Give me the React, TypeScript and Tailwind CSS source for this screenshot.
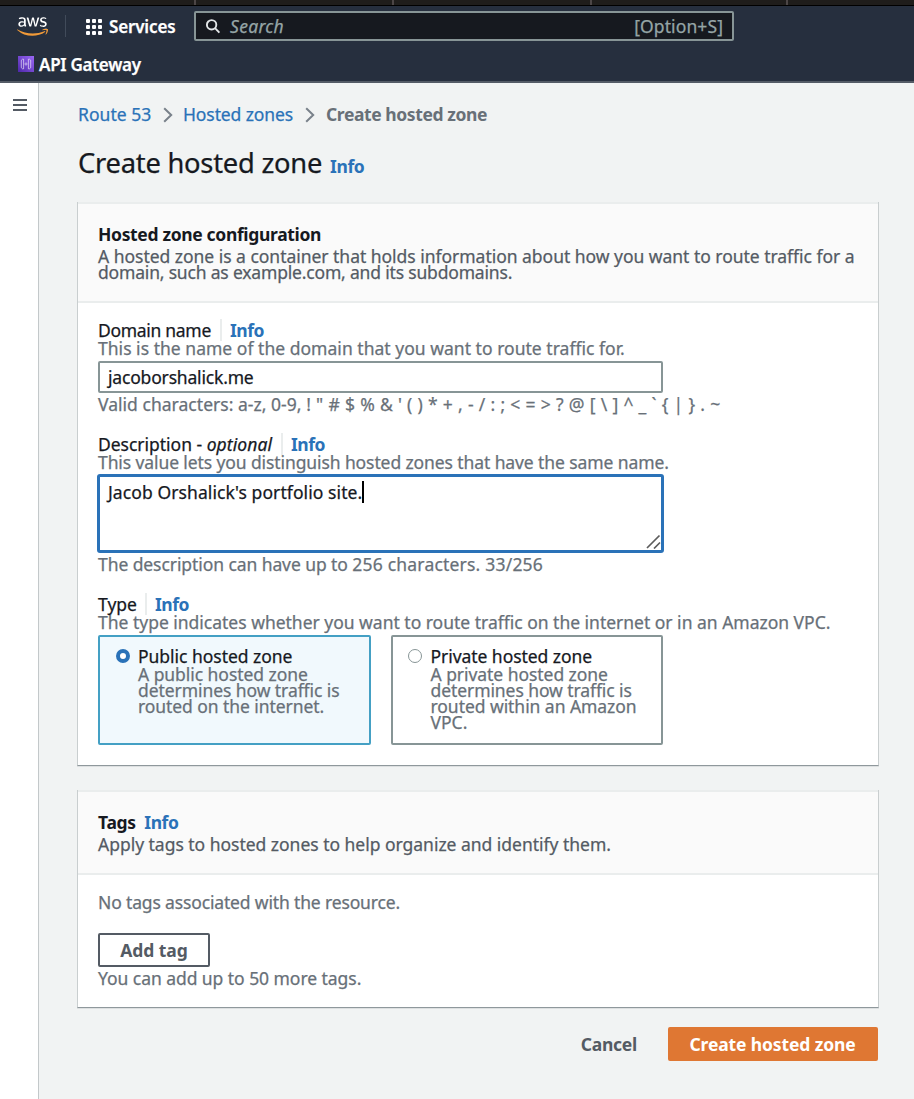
import type { ReactNode } from "react";
import { FaAws } from "react-icons/fa";

function Info({ className = "" }: { className?: string }) {
  return (
    <a className={`font-bold tracking-[-0.45px] text-[#2a72b8] ${className}`}>Info</a>
  );
}

function Chevron() {
  return (
    <svg width="10" height="16" viewBox="0 0 10 16" fill="none" stroke="#79818a" strokeWidth="2">
      <path d="M1.2 1.2 8.2 8l-7 6.8" />
    </svg>
  );
}

function FieldLabel({ children, gap }: { children: ReactNode; gap: string }) {
  return (
    <div className="flex h-[22px] items-center whitespace-pre text-[#16191f]">
      {children}
      <span className={`h-[22px] w-0.5 shrink-0 bg-[#eaeded] ${gap}`} />
      <Info className="ml-2" />
    </div>
  );
}

function Card({ header, children }: { header: ReactNode; children: ReactNode }) {
  return (
    <section className="w-[802px] border-x border-b border-x-[#c9cecf] border-b-[#8f989c] bg-white shadow-[0_1px_0_#dde0e1]">
      <div className="border-y-2 border-[#eaeded] bg-[#fafafa] pl-5">{header}</div>
      <div className="pl-5">{children}</div>
    </section>
  );
}

function ApiGatewayIcon() {
  return (
    <svg width="16" height="16" viewBox="0 0 16 16">
      <defs>
        <linearGradient id="apigw" x1="0" y1="1" x2="1" y2="0">
          <stop offset="0" stopColor="#4d27aa" />
          <stop offset="1" stopColor="#9a68f5" />
        </linearGradient>
      </defs>
      <rect width="16" height="16" fill="url(#apigw)" />
      <g fill="none" stroke="#fff" strokeWidth="0.65" strokeOpacity="0.9">
        <path d="M3.300 4.300v7.400l1.200 1.100h1.100V3.200H4.500z" />
        <path d="M12.700 4.300v7.400l-1.200 1.100h-1.100V3.200h1.100z" />
        <path d="M7.600 6.700 7 8l.6 1.300M8.400 6.700 9 8l-.6 1.300" />
      </g>
    </svg>
  );
}

function TopNav() {
  return (
    <header>
      <div className="flex h-[6px] border-b border-black bg-[#1f1d1b]">
        <div className="h-[5px] w-[196px] border-r-2 border-[#4c4646]" />
        <div className="h-[5px] w-[198px] border-r-2 border-[#4c4646]" />
        <div className="h-[5px] w-[198px] border-r-2 border-[#4c4646]" />
        <div className="h-[5px] w-[196px] border-r-2 border-[#4c4646]" />
      </div>
      <div className="flex h-[77px] flex-col border-b-2 border-[#545b66] bg-[#262f3e] pt-[5px]">
        <div className="flex h-[30px] items-center">
          <svg width="0" height="0">
            <defs>
              <linearGradient id="aws" x1="0" y1="0" x2="0" y2="1">
                <stop offset="0.61" stopColor="#fff" />
                <stop offset="0.61" stopColor="#f19a38" />
              </linearGradient>
            </defs>
          </svg>
          <FaAws className="ml-[17px] h-[25px] w-[31px]" style={{ fill: "url(#aws)" }} />
          <span className="ml-[17px] h-[22px] w-px bg-[#414b5a]" />
          <div className="mt-[2px] ml-5 grid grid-cols-3 gap-0.5">
            {Array.from({ length: 9 }, (_, i) => (
              <span key={i} className="size-1 rounded-[1px] bg-white" />
            ))}
          </div>
          <span className="mt-[2px] ml-[7px] w-[85px] text-[17px] font-semibold tracking-[-0.15px] text-white">Services</span>
          <div className="flex h-[30px] w-[540px] items-center rounded-[2px] border-2 border-[#879596] bg-[#16191f] text-[#95a5a6]">
            <svg className="ml-[9px]" width="16" height="16" viewBox="0 0 16 16" fill="none" stroke="#e3e7e9" strokeWidth="1.900">
              <circle cx="6.600" cy="6.800" r="4.700" />
              <path d="m10 10.200 4.400 4.500" />
            </svg>
            <span className="ml-[9px] grow tracking-[0.3px] italic">Search</span>
            <span className="mr-[9px] tracking-[0.1px]">[Option+S]</span>
          </div>
        </div>
        <div className="mt-[11px] flex h-[24px] items-center pl-[18px]">
          <ApiGatewayIcon />
          <span className="mt-[2px] ml-[5px] text-[17px] font-semibold tracking-[-0.28px] text-white">API Gateway</span>
        </div>
      </div>
    </header>
  );
}

function Radio({ checked }: { checked?: boolean }) {
  return checked ? (
    <span className="mt-[1px] size-[14px] shrink-0 rounded-full border-4 border-[#2a72b8] bg-white" />
  ) : (
    <span className="mt-[1px] size-[14px] shrink-0 rounded-full border border-[#879596] bg-white" />
  );
}

export default function App() {
  return (
    <div className="flex h-[1099px] w-[914px] flex-col overflow-hidden bg-[#f1f3f3] font-['Noto_Sans',sans-serif] text-[17.5px] leading-4 whitespace-nowrap [-webkit-text-stroke:0.25px] [&_.font-bold]:[-webkit-text-stroke:0px]">
      <TopNav />
      <div className="flex grow">
        <aside className="w-[39px] border-r border-[#c3c8ca] bg-white pt-4 pl-[13px]">
          <div className="flex w-[14px] flex-col gap-[3px]">
            <span className="h-0.5 bg-[#545b64]" />
            <span className="h-0.5 bg-[#545b64]" />
            <span className="h-0.5 bg-[#545b64]" />
          </div>
        </aside>
        <main className="ml-[38px] w-[802px]">
          <nav className="mt-6 flex h-4 items-center pl-px">
            <a className="-mt-0.5 w-[85px] tracking-[0.03px] text-[#2a72b8]">Route 53</a>
            <Chevron />
            <a className="-mt-0.5 ml-[10px] w-[122px] tracking-[-0.1px] text-[#2a72b8]">Hosted zones</a>
            <Chevron />
            <span className="-mt-0.5 ml-[11px] font-bold tracking-[-0.41px] text-[#687078]">Create hosted zone</span>
          </nav>
          <div className="mt-[24px] mb-[23px] flex h-8 items-baseline pl-px leading-8">
            <h1 className="text-[27.3px] font-normal tracking-[-0.23px] text-[#16191f]">Create hosted zone</h1>
            <Info className="ml-2" />
          </div>

          <Card
            header={
              <div className="h-[97px] pt-[22px]">
                <h2 className="mb-[6px] font-bold tracking-[-0.34px] text-[#16191f]">Hosted zone configuration</h2>
                <p className="tracking-[-0.025px] text-[#545b64]">
                  A hosted zone is a container that holds information about how you want to route traffic for a
                </p>
                <p className="tracking-[-0.18px] text-[#545b64]">domain, such as example.com, and its subdomains.</p>
              </div>
            }
          >
            <div className="h-[462px] pt-4 text-[#687078]">
              <FieldLabel gap="ml-[9px]">
                <span className="tracking-[-0.3px]">Domain name</span>
              </FieldLabel>
              <p className="-mt-px tracking-[0.025px]">This is the name of the domain that you want to route traffic for.</p>
              <div className="mt-[5px] flex h-8 w-[565px] items-center rounded-[2px] border-2 border-[#879596] bg-white pl-2 tracking-[-0.18px] text-[#16191f]">
                jacoborshalick.me
              </div>
              <p className="mt-[3px] mb-[21px] whitespace-pre">
                <span className="tracking-[0.03px]">{"Valid characters: a-z, 0-9, "}</span>
                <span className="tracking-[0.33px]">{"! \" # $ % & ' ( ) * + , - / : ; < = > ? @ [ \\ ] ^ _ ` { | } . ~"}</span>
              </p>

              <FieldLabel gap="ml-[9px]">
                <span className="tracking-[-0.02px]">{"Description - "}</span>
                <i className="tracking-[0.08px]">optional</i>
              </FieldLabel>
              <p className="-mt-px tracking-[-0.1px]">This value lets you distinguish hosted zones that have the same name.</p>
              <div className="relative mt-[4px] -ml-px flex h-[79px] w-[567px] items-start rounded-[3px] border-3 border-[#2a72b8] bg-white pt-1 pl-2 text-[#16191f]">
                <span className="mt-[3px] tracking-[0.09px]">Jacob Orshalick&apos;s portfolio site.</span>
                <span className="h-[22px] w-[1.5px] bg-black" />
                <svg className="absolute right-0 bottom-[1px]" width="15" height="15" viewBox="0 0 15 15" stroke="#5c5c5c" strokeWidth="1.700">
                  <path d="M1 14 13.500 1.500M8 14.500l6-6" />
                </svg>
              </div>
              <p className="mt-[3px] mb-[21px] whitespace-pre">
                <span className="tracking-[-0.08px]">{"The description can have up to "}</span>
                <span className="tracking-[0.2px]">256 characters. 33/256</span>
              </p>

              <FieldLabel gap="ml-2">
                <span>Type</span>
              </FieldLabel>
              <p className="-mt-px tracking-[-0.01px]">
                The type indicates whether you want to route traffic on the internet or in an Amazon VPC.
              </p>
              <div className="mt-[5px] flex gap-5">
                <div className="flex h-[110px] w-[273px] rounded-[2px] border-2 border-[#44a0c4] bg-[#f1f9fd] pt-[11px] pl-4">
                  <Radio checked />
                  <div className="ml-2">
                    <p className="mb-0.5 tracking-[-0.03px] text-[#16191f]">Public hosted zone</p>
                    <p className="tracking-[-0.05px]">A public hosted zone</p>
                    <p className="tracking-[-0.07px]">determines how traffic is</p>
                    <p className="tracking-[-0.07px]">routed on the internet.</p>
                  </div>
                </div>
                <div className="flex h-[110px] w-[272px] rounded-[2px] border-2 border-[#879596] bg-white pt-[11px] pl-[15px]">
                  <Radio />
                  <div className="ml-[8.5px]">
                    <p className="mb-0.5 tracking-[-0.05px] text-[#16191f]">Private hosted zone</p>
                    <p className="tracking-[-0.05px]">A private hosted zone</p>
                    <p className="tracking-[-0.08px]">determines how traffic is</p>
                    <p className="tracking-[-0.05px]">routed within an Amazon</p>
                    <p>VPC.</p>
                  </div>
                </div>
              </div>
            </div>
          </Card>

          <div className="h-6" />

          <Card
            header={
              <div className="h-[81px] pt-[22px]">
                <div className="mb-[6px] flex gap-[8.5px]">
                  <h2 className="font-bold tracking-[-0.3px] text-[#16191f]">Tags</h2>
                  <Info />
                </div>
                <p className="tracking-[-0.02px] text-[#545b64]">
                  Apply tags to hosted zones to help organize and identify them.
                </p>
              </div>
            }
          >
            <div className="h-[132px] pt-[19px] text-[#687078]">
              <p className="tracking-[-0.15px]">No tags associated with the resource.</p>
              <button className="mt-[23px] flex h-[34px] w-[112px] items-center justify-center rounded-[2px] border-2 border-[#545b64] bg-white font-bold tracking-[-0.08px] text-[#545b64]">
                Add tag
              </button>
              <p className="mt-[3px] tracking-[-0.05px]">You can add up to 50 more tags.</p>
            </div>
          </Card>

          <div className="mt-[19px] flex items-center justify-end pr-px">
            <button className="mr-[31px] font-bold tracking-[-0.25px] text-[#545b64]">Cancel</button>
            <button className="h-[34px] w-[210px] rounded-[2px] bg-[#df7733] pr-px font-bold tracking-[-0.13px] text-white">
              Create hosted zone
            </button>
          </div>
        </main>
      </div>
    </div>
  );
}
